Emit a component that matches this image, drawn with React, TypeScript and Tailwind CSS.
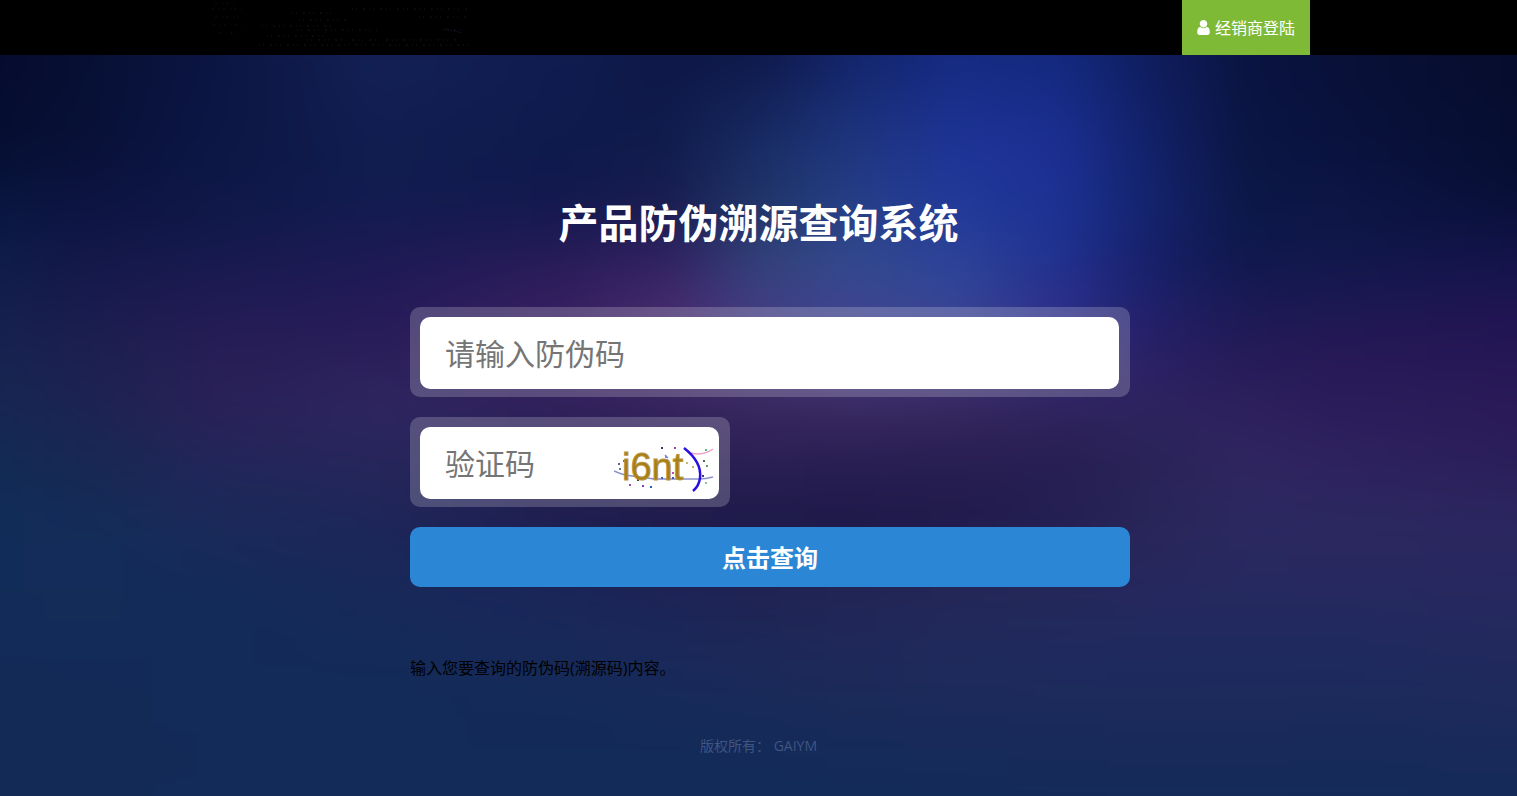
import React from 'react';

// Backdrop colours: each row is a horizontal band, fading into the next one
const STOPS = [0, 6, 14, 25, 37, 44, 50, 56, 63, 70, 76, 82, 88, 100];

const ROWS = [
  { y: 0, colors: ['#050b2e', '#071034', '#0c1542', '#142155', '#101c50', '#0e1848', '#0e194a', '#13246a', '#152b82', '#13297e', '#0f1d5c', '#0a1442', '#091139', '#060c2c'] },
  { y: 90, colors: ['#060f32', '#091138', '#0c1745', '#111d50', '#0f1a4c', '#101c4c', '#192c64', '#1f367e', '#1e3496', '#1c2f92', '#122168', '#0b1644', '#0a133e', '#060e32'] },
  { y: 150, colors: ['#091640', '#0d1441', '#0f1848', '#131c50', '#13194e', '#1a1d51', '#213668', '#263f86', '#223a9a', '#1c3192', '#14236c', '#0c1848', '#0d1646', '#091038'] },
  { y: 200, colors: ['#0f1b48', '#131849', '#161a4e', '#1c1a54', '#261b57', '#2e2160', '#324178', '#32498c', '#2b4299', '#203190', '#162068', '#10184c', '#11184b', '#12134a'] },
  { y: 250, colors: ['#141f4d', '#191b4e', '#211b54', '#241b58', '#351f60', '#452a6c', '#3f3e82', '#3c468f', '#364696', '#2b2f8a', '#1f2069', '#1a1a55', '#1c1852', '#1f1551'] },
  { y: 295, colors: ['#18224f', '#1c2050', '#271e56', '#2a1e59', '#3b2160', '#4a2c6c', '#4a3d82', '#4a428c', '#443e8c', '#352e80', '#291f66', '#241b57', '#261956', '#251655'] },
  { y: 350, colors: ['#172652', '#1d2352', '#292158', '#2f2660', '#30215c', '#34245e', '#39285f', '#3a2a62', '#372861', '#30245e', '#2e245f', '#2d205d', '#2b1c5b', '#2a1a58'] },
  { y: 410, colors: ['#122b55', '#182853', '#22265a', '#26265b', '#281f53', '#291f52', '#291f52', '#281e51', '#271e50', '#271f53', '#292358', '#302660', '#2e235f', '#2b1f5a'] },
  { y: 470, colors: ['#122d59', '#142c59', '#1a2a59', '#1e2659', '#1e1e50', '#1e1b4b', '#1d1a49', '#1e1949', '#201b4b', '#241f52', '#29265a', '#2b2960', '#2c2860', '#2c2760'] },
  { y: 530, colors: ['#132c59', '#132d59', '#142b59', '#18295a', '#1b2558', '#1e2356', '#202354', '#222556', '#242758', '#25285a', '#26285e', '#26295f', '#26295f', '#27285f'] },
  { y: 600, colors: ['#132b58', '#132b58', '#132b59', '#142b59', '#172a5a', '#1a295a', '#1d2959', '#1f295a', '#202a5c', '#202a5e', '#1f2a5e', '#1f2a5e', '#1f2a5e', '#222a5d'] },
  { y: 680, colors: ['#132a57', '#132a57', '#132b58', '#132b59', '#132b59', '#142b59', '#152b59', '#172b59', '#182b5a', '#192a5a', '#1a2a5a', '#1a2a5a', '#192a5a', '#1a2a5a'] },
  { y: 741, colors: ['#132a57', '#132a57', '#132b58', '#132b59', '#132b59', '#132b59', '#132b59', '#132b59', '#132b59', '#142b59', '#142b59', '#142b59', '#142b59', '#152a59'] },
];

function Backdrop() {
  return (
    <svg className="absolute inset-0 -z-10 h-full w-full" viewBox="0 0 1517 741" preserveAspectRatio="none" aria-hidden="true">
      <defs>
        <filter id="soften" filterUnits="userSpaceOnUse" x="-80" y="-80" width="1677" height="901" colorInterpolationFilters="sRGB">
          <feGaussianBlur stdDeviation="18" />
        </filter>
        {ROWS.map((row, i) => (
          <React.Fragment key={row.y}>
            <linearGradient id={`band${i}`} gradientUnits="userSpaceOnUse" x1="0" y1="0" x2="1517" y2="0">
              {row.colors.map((color, j) => (
                <stop key={j} offset={`${STOPS[j]}%`} stopColor={color} />
              ))}
            </linearGradient>
            {i > 0 && (
              <>
                <linearGradient id={`fade${i}`} gradientUnits="userSpaceOnUse" x1="0" y1={ROWS[i - 1].y} x2="0" y2={row.y}>
                  <stop offset="0" stopColor="#fff" stopOpacity="0" />
                  <stop offset="1" stopColor="#fff" />
                </linearGradient>
                <mask id={`mask${i}`} maskUnits="userSpaceOnUse" x="-80" y="-80" width="1677" height="901">
                  <rect x="-80" y="-80" width="1677" height="901" fill={`url(#fade${i})`} />
                </mask>
              </>
            )}
          </React.Fragment>
        ))}
      </defs>
      <g filter="url(#soften)">
        {ROWS.map((row, i) => (
          <rect key={row.y} x="-80" y="-80" width="1677" height="901" fill={`url(#band${i})`} mask={i > 0 ? `url(#mask${i})` : undefined} />
        ))}
      </g>
    </svg>
  );
}

function UserIcon() {
  return (
    <svg className="h-[15px] w-[13px]" viewBox="256 128 1280 1536" fill="currentColor" aria-hidden="true">
      <path d="M1536 1399q0 109-62.5 187t-150.5 78h-854q-88 0-150.5-78t-62.5-187q0-85 8.5-160.5t31.5-152 58.5-131 94-89 134.5-34.5q131 128 313 128t313-128q76 0 134.5 34.5t94 89 58.5 131 31.5 152 8.5 160.5zm-256-887q0 159-112.5 271.5t-271.5 112.5-271.5-112.5-112.5-271.5 112.5-271.5 271.5-112.5 271.5 112.5 112.5 271.5z" />
    </svg>
  );
}

// Dark logo, barely visible on the black bar
function Logo() {
  return (
    <svg className="h-[55px] w-[270px]" viewBox="0 0 270 55" fill="none" aria-hidden="true">
      <path d="M8 3h22M5 9h32M8 17h25M6 25h30M12 33h20" stroke="#0c0c16" strokeDasharray="2 5 1 3" />
      <path d="M145 9h115M85 13h40M212 17h48M92 20h50M55 26h70M90 30h80M236 30h20M60 36h60M100 40h150M52 45h210" stroke="#161616" strokeDasharray="1 3 1 6 2 4" />
      <path d="M238 29l18 4" stroke="#1c2444" strokeDasharray="1 2" />
    </svg>
  );
}

const DOTS = [
  [47, 0, '#304070'], [60, 0, '#a040a0'], [91, 2, '#50c070'], [4, 16, '#6060b0'], [9, 13, '#6070c0'],
  [5, 21, '#5080a0'], [15, 37, '#a050b0'], [28, 38, '#8040b0'], [36, 39, '#3060c0'], [23, 32, '#305030'],
  [89, 13, '#407040'], [92, 18, '#60a060'], [78, 19, '#c0b060'], [72, 15, '#c0c070'], [58, 25, '#b050b0'],
  [58, 30, '#4050b0'], [47, 30, '#4060c0'], [91, 35, '#90c090'], [88, 28, '#503080'], [51, 9, '#8090c0'],
] as const;

function Captcha() {
  return (
    <svg className="h-[45px] w-[100px]" viewBox="0 0 100 45" aria-hidden="true">
      <path d="M0 24q8 4 18 5t22 3h44q8 0 15-2" fill="none" stroke="#8a90cc" strokeWidth="1.5" />
      {DOTS.map(([x, y, color]) => (
        <rect key={`${x}-${y}`} x={x} y={y} width="2" height="2" fill={color} />
      ))}
      <path d="M51 8l3 3" stroke="#8088c8" strokeWidth="1.5" />
      <text x="8" y="33" fontSize="38" fill="#a87c14" stroke="#b8943c" strokeWidth="1" className="font-['Liberation_Sans',sans-serif]">
        i6nt
      </text>
      <path d="M77 6q12 3 22-4" fill="none" stroke="#f09cc8" strokeWidth="1.5" />
      <path d="M70 1q18 14 16 30q-1 8-7 13" fill="none" stroke="#2a10e0" strokeWidth="2.5" />
    </svg>
  );
}

function App() {
  return (
    <div className="flex min-h-screen flex-col bg-[#132a57] font-['Open_Sans','Noto_Sans_CJK_SC',sans-serif]">
      {/* Top bar */}
      <header className="bg-black">
        <div className="mx-auto flex max-w-[1103px] items-center justify-between">
          <Logo />
          <a href="#login" className="flex h-[55px] items-center gap-[5px] bg-[#7fba37] px-[15px] text-base text-white">
            <UserIcon />
            经销商登陆
          </a>
        </div>
      </header>

      <main className="relative isolate grow overflow-hidden">
        <Backdrop />
        <div className="mx-auto max-w-[697px]">
          <h1 className="pt-[138px] text-center text-[40px] leading-[60px] font-bold text-white">产品防伪溯源查询系统</h1>

          {/* Query form */}
          <form className="mt-[54px] flex flex-col gap-5 sm:-mr-[23px]" onSubmit={(e) => e.preventDefault()}>
            <div className="rounded-[10px] bg-white/20 pt-[10px] pr-[11px] pb-2 pl-[10px]">
              <input
                type="text"
                aria-label="请输入防伪码"
                placeholder="请输入防伪码"
                className="block h-[72px] w-full rounded-[10px] bg-white px-[25px] text-[30px] text-gray-800 outline-none placeholder:text-[#757575]"
              />
            </div>

            <div className="w-[320px] rounded-[10px] bg-white/20 pt-[10px] pr-[11px] pb-2 pl-[10px]">
              <div className="flex h-[72px] items-center rounded-[10px] bg-white pr-[5px] pl-[25px]">
                <input
                  type="text"
                  aria-label="验证码"
                  placeholder="验证码"
                  className="h-full w-0 grow text-[30px] text-gray-800 outline-none placeholder:text-[#757575]"
                />
                <button type="button" aria-label="i6nt" className="mt-3 cursor-pointer">
                  <Captcha />
                </button>
              </div>
            </div>

            <button type="submit" className="h-[60px] cursor-pointer rounded-[10px] bg-[#2b87d5] pt-0.5 text-2xl font-bold text-white">
              点击查询
            </button>
          </form>

          <p className="mt-[69px] text-base text-black">输入您要查询的防伪码(溯源码)内容。</p>
          <footer className="mt-14 pb-10 text-center text-sm text-[#3f5582]">版权所有： GAIYM</footer>
        </div>
      </main>
    </div>
  );
}

export default App;
